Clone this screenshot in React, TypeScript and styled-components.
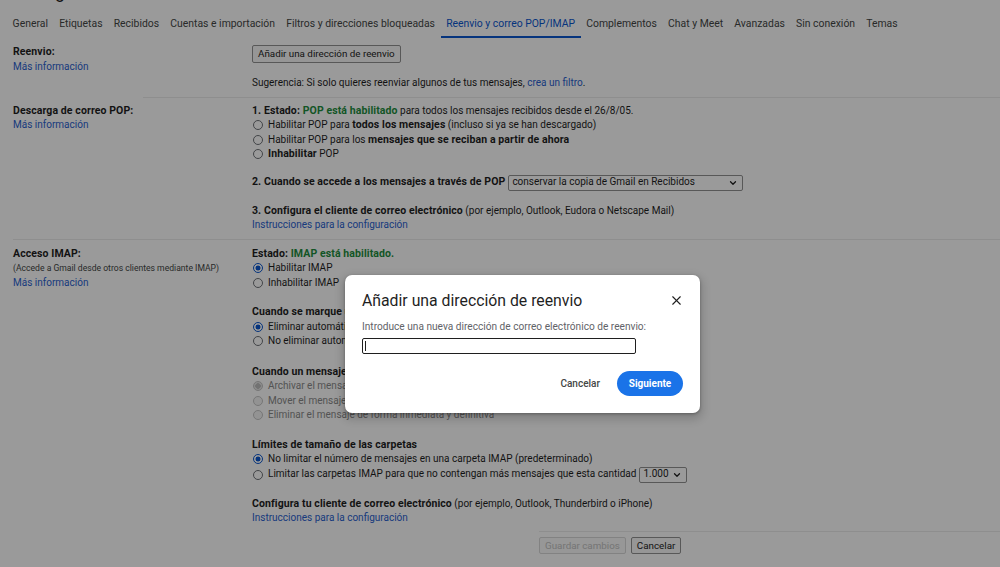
import React from 'react';
import styled, { createGlobalStyle, css } from 'styled-components';
import { ChevronDown, X } from 'lucide-react';

const Global = createGlobalStyle`
  html, body { margin: 0; padding: 0; background: #fff; }
  body {
    font-family: Roboto, "Liberation Sans", Arial, sans-serif;
    color: #1f1f1f;
    overflow: hidden;
  }
  * { box-sizing: border-box; }
`;

const Page = styled.div`
  width: 1000px;
  height: 567px;
  overflow: hidden;
  position: relative;
  background: #fff;
  font-size: 10px;
`;

const PageTitle = styled.div`
  margin-top: -16px;
  height: 16px;
  line-height: 16px;
  font-size: 18px;
  padding-left: 13px;
  color: #1f1f1f;
  white-space: nowrap;
`;

const Tabs = styled.nav`
  display: flex;
  height: 38px;
  padding-left: 7px;
`;

const Tab = styled.div<{ $active?: boolean }>`
  display: flex;
  align-items: center;
  padding: 11px 5.6px 0;
  font-size: 10.4px;
  color: #444746;
  white-space: nowrap;
  border-bottom: 2px solid transparent;
  ${(p) =>
    p.$active &&
    css`
      color: #0b57d0;
      border-bottom-color: #0b57d0;
    `}
`;

const Section = styled.section<{ $last?: boolean; $pt?: number; $lineFrom?: number }>`
  position: relative;
  display: grid;
  grid-template-columns: 239px 1fr;
  padding: ${(p) => p.$pt ?? 6}px 0 ${(p) => (p.$last ? 5 : 7)}px 13px;
  line-height: 14.5px;
  ${(p) =>
    !p.$last &&
    css`
      &::after {
        content: '';
        position: absolute;
        left: ${p.$lineFrom ?? 13}px;
        right: 0;
        bottom: 0;
        height: 1px;
        background: #ececec;
      }
    `}
`;

const LeftCol = styled.div`
  display: flex;
  flex-direction: column;
`;

const RightCol = styled.div`
  display: flex;
  flex-direction: column;
  align-items: flex-start;
`;

const B = styled.b`
  font-size: 10.5px;
  letter-spacing: 0.1px;
  font-weight: 700;
`;

const Label = styled(B)`
  display: block;
  white-space: nowrap;
`;

const Green = styled(B)`
  color: #1e8e3e;
`;

const Note = styled.div`
  font-size: 8.6px;
  color: #444746;
  white-space: nowrap;
`;

const Link = styled.a`
  color: #2a62d0;
  text-decoration: none;
  white-space: nowrap;
`;

const Block = styled.div<{ $mt?: number }>`
  display: flex;
  flex-direction: column;
  align-items: flex-start;
  margin-top: ${(p) => p.$mt ?? 0}px;
`;

const Line = styled.div<{ $disabled?: boolean }>`
  display: flex;
  align-items: center;
  min-height: 14.5px;
  white-space: nowrap;
  color: ${(p) => (p.$disabled ? '#8a8a8a' : 'inherit')};
`;

const RadioDot = styled.span<{ $checked?: boolean; $disabled?: boolean }>`
  width: 10px;
  height: 10px;
  border-radius: 50%;
  margin: 0 5px 0 1px;
  flex: none;
  border: 1px solid #6f7378;
  background: #fff;
  ${(p) =>
    p.$checked &&
    css`
      border: 1.5px solid #0b57d0;
      background: radial-gradient(circle, #0b57d0 0 2.3px, #fff 2.7px);
    `}
  ${(p) =>
    p.$disabled &&
    css`
      border: 1px solid #c4c4c4;
      background: ${p.$checked ? 'radial-gradient(circle, #bdbdbd 0 2.5px, #e6e6e6 3px)' : '#f4f4f4'};
    `}
`;

const Btn = styled.button<{ $disabled?: boolean; $h?: number }>`
  font: inherit;
  font-size: 9.8px;
  height: ${(p) => p.$h ?? 18}px;
  padding: 0 5px;
  border: 1px solid #929292;
  border-radius: 2px;
  background: #f8f8f8;
  color: #1f1f1f;
  white-space: nowrap;
  ${(p) =>
    p.$disabled &&
    css`
      color: #c2c2c2;
      border-color: #d8d8d8;
      background: #fafafa;
    `}
`;

const FakeSelect = styled.div<{ $w: number }>`
  display: flex;
  align-items: center;
  justify-content: space-between;
  width: ${(p) => p.$w}px;
  height: 16px;
  margin-left: 3px;
  padding: 0 4px 0 3px;
  border: 1px solid #929292;
  border-radius: 2px;
  background: #fff;
  font-size: 10px;
  color: #1f1f1f;
`;

const Footer = styled.div`
  display: flex;
  gap: 5px;
  margin-left: 539px;
  width: 461px;
  padding-top: 5px;
  border-top: 1px solid #ececec;
`;

const Backdrop = styled.div`
  position: absolute;
  top: 0;
  left: 0;
  width: 1000px;
  height: 567px;
  z-index: 10;
  background: rgba(0, 0, 0, 0.396);
  padding: 275px 0 0 345px;
`;

const Dialog = styled.div`
  width: 355px;
  height: 138px;
  background: #fff;
  border-radius: 7px;
  box-shadow: 0 4px 8px 3px rgba(0, 0, 0, 0.15), 0 1px 3px rgba(0, 0, 0, 0.3);
  padding: 15px 17px 17px;
  display: flex;
  flex-direction: column;
  color: #1f1f1f;
`;

const DialogHead = styled.div`
  display: flex;
  align-items: center;
  justify-content: space-between;
  height: 20px;
`;

const DialogTitle = styled.h2`
  margin: 0;
  font-size: 15.8px;
  font-weight: 400;
  color: #1f1f1f;
  white-space: nowrap;
`;

const CloseBtn = styled.span`
  display: flex;
  margin-right: -1px;
  color: #1f1f1f;
`;

const DialogLabel = styled.div`
  margin-top: 11px;
  line-height: 12px;
  font-size: 10.15px;
  color: #5f6368;
  white-space: nowrap;
`;

const Input = styled.div`
  margin-top: 5px;
  width: 274px;
  height: 16px;
  border: 1.6px solid #1f1f1f;
  border-radius: 2px;
  display: flex;
  align-items: center;
  padding-left: 2px;
`;

const Caret = styled.span`
  width: 1px;
  height: 10px;
  background: #1f1f1f;
`;

const Actions = styled.div`
  margin-top: auto;
  display: flex;
  align-items: center;
  justify-content: flex-end;
  gap: 17px;
`;

const TextBtn = styled.span`
  font-size: 10px;
  font-weight: 500;
  color: #444746;
`;

const PrimaryBtn = styled.span`
  display: flex;
  align-items: center;
  justify-content: center;
  width: 66px;
  height: 25px;
  border-radius: 13px;
  background: #1a73e8;
  color: #fff;
  font-size: 10px;
  font-weight: 700;
`;

const tabs = [
  'General',
  'Etiquetas',
  'Recibidos',
  'Cuentas e importación',
  'Filtros y direcciones bloqueadas',
  'Reenvio y correo POP/IMAP',
  'Complementos',
  'Chat y Meet',
  'Avanzadas',
  'Sin conexión',
  'Temas',
];

const Radio: React.FC<{ checked?: boolean; disabled?: boolean; children: React.ReactNode }> = ({
  checked,
  disabled,
  children,
}) => (
  <Line $disabled={disabled}>
    <RadioDot $checked={checked} $disabled={disabled} />
    <span>{children}</span>
  </Line>
);

export default function App() {
  return (
    <Page>
      <Global />
      <PageTitle>Configuración</PageTitle>
      <Tabs>
        {tabs.map((t) => (
          <Tab key={t} $active={t.startsWith('Reenvio')}>
            {t}
          </Tab>
        ))}
      </Tabs>

      <Section $pt={7} $lineFrom={143}>
        <LeftCol>
          <Label>Reenvio:</Label>
          <Link href="#">Más información</Link>
        </LeftCol>
        <RightCol>
          <Btn>Añadir una dirección de reenvio</Btn>
          <Block $mt={13}>
            <Line>
              Sugerencia: Si solo quieres reenviar algunos de tus mensajes,&nbsp;
              <Link href="#">crea un filtro</Link>.
            </Line>
          </Block>
        </RightCol>
      </Section>

      <Section>
        <LeftCol>
          <Label>Descarga de correo POP:</Label>
          <Link href="#">Más información</Link>
        </LeftCol>
        <RightCol>
          <Block>
            <Line>
              <B>1. Estado:&nbsp;</B>
              <Green>POP está habilitado</Green>&nbsp;para todos los mensajes recibidos desde el 26/8/05.
            </Line>
            <Radio>
              Habilitar POP para <B>todos los mensajes</B> (incluso si ya se han descargado)
            </Radio>
            <Radio>
              Habilitar POP para los <B>mensajes que se reciban a partir de ahora</B>
            </Radio>
            <Radio>
              <B>Inhabilitar</B> POP
            </Radio>
          </Block>
          <Block $mt={13}>
            <Line>
              <B>2. Cuando se accede a los mensajes a través de POP</B>
              <FakeSelect $w={235}>
                <span>conservar la copia de Gmail en Recibidos</span>
                <ChevronDown size={10} strokeWidth={3} />
              </FakeSelect>
            </Line>
          </Block>
          <Block $mt={13}>
            <Line>
              <B>3. Configura el cliente de correo electrónico</B>&nbsp;(por ejemplo, Outlook, Eudora o
              Netscape Mail)
            </Line>
            <Link href="#">Instrucciones para la configuración</Link>
          </Block>
        </RightCol>
      </Section>

      <Section $last $pt={7}>
        <LeftCol>
          <Label>Acceso IMAP:</Label>
          <Note>(Accede a Gmail desde otros clientes mediante IMAP)</Note>
          <Link href="#">Más información</Link>
        </LeftCol>
        <RightCol>
          <Block>
            <Line>
              <B>Estado:&nbsp;</B>
              <Green>IMAP está habilitado.</Green>
            </Line>
            <Radio checked>Habilitar IMAP</Radio>
            <Radio>Inhabilitar IMAP</Radio>
          </Block>
          <Block $mt={15}>
            <Line>
              <B>Cuando se marque un mensaje como eliminado en IMAP:</B>
            </Line>
            <Radio checked>Eliminar automáticamente: actualizar el servidor de inmediato</Radio>
            <Radio>No eliminar automáticamente: esperar a que el cliente actualice el servidor</Radio>
          </Block>
          <Block $mt={16}>
            <Line>
              <B>Cuando un mensaje se marque como eliminado de la última carpeta IMAP:</B>
            </Line>
            <Radio checked disabled>
              Archivar el mensaje (predeterminado)
            </Radio>
            <Radio disabled>Mover el mensaje a la papelera</Radio>
            <Radio disabled>Eliminar el mensaje de forma inmediata y definitiva</Radio>
          </Block>
          <Block $mt={15}>
            <Line>
              <B>Límites de tamaño de las carpetas</B>
            </Line>
            <Radio checked>No limitar el número de mensajes en una carpeta IMAP (predeterminado)</Radio>
            <Line>
              <RadioDot />
              <span>Limitar las carpetas IMAP para que no contengan más mensajes que esta cantidad</span>
              <FakeSelect $w={48}>
                <span>1.000</span>
                <ChevronDown size={10} strokeWidth={3} />
              </FakeSelect>
            </Line>
          </Block>
          <Block $mt={14}>
            <Line>
              <B>Configura tu cliente de correo electrónico</B>&nbsp;(por ejemplo, Outlook, Thunderbird o
              iPhone)
            </Line>
            <Link href="#">Instrucciones para la configuración</Link>
          </Block>
        </RightCol>
      </Section>

      <Footer>
        <Btn $disabled $h={17}>Guardar cambios</Btn>
        <Btn $h={17}>Cancelar</Btn>
      </Footer>

      <Backdrop>
        <Dialog role="dialog">
          <DialogHead>
            <DialogTitle>Añadir una dirección de reenvio</DialogTitle>
            <CloseBtn>
              <X size={15} strokeWidth={1.8} />
            </CloseBtn>
          </DialogHead>
          <DialogLabel>Introduce una nueva dirección de correo electrónico de reenvio:</DialogLabel>
          <Input>
            <Caret />
          </Input>
          <Actions>
            <TextBtn>Cancelar</TextBtn>
            <PrimaryBtn>Siguiente</PrimaryBtn>
          </Actions>
        </Dialog>
      </Backdrop>
    </Page>
  );
}
